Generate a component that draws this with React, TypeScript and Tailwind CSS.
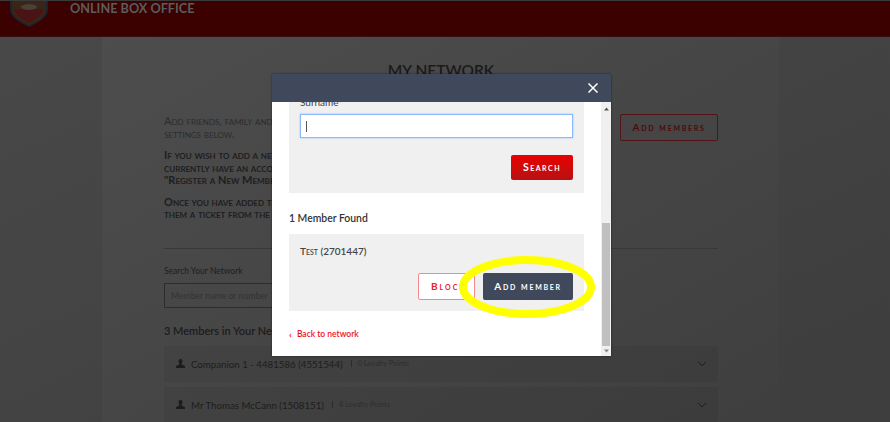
const font = "font-['Lato',sans-serif]";

function UserIcon() {
  return (
    <svg width="9" height="9" viewBox="0 0 12 11" preserveAspectRatio="none" className="shrink-0 text-[#1c1c1c]">
      <path
        fill="currentColor"
        d="M6 0c1.700 0 2.600 1.100 2.600 2.700 0 1.200-.5 2.200-1.100 2.900v1l3.600 1.700c.6.3.9.7.9 1.300V11H0V9.600c0-.6.3-1 .9-1.300l3.600-1.700v-1C3.900 4.900 3.400 3.900 3.400 2.700 3.400 1.100 4.300 0 6 0z"
      />
    </svg>
  );
}

function Chevron() {
  return (
    <svg width="10" height="6" viewBox="0 0 10 6" fill="none" stroke="#1c1c1c" strokeWidth="1" className="shrink-0">
      <path d="M1 .8l4 4 4-4" />
    </svg>
  );
}

function MemberRow({ name, points }: { name: string; points: string }) {
  return (
    <div className="flex h-[36px] items-center justify-between bg-black/5 pl-[12px] pr-[11px]">
      <div className="flex items-center">
        <UserIcon />
        <span className="ml-[6px] text-[9.700px] text-[#1d1d1d]">{name}</span>
        <span className="ml-[8px] h-[7px] w-px bg-[#2c2c2c]" />
        <span className="ml-[6px] text-[7.400px] text-[#2e2e2e]">{points}</span>
      </div>
      <Chevron />
    </div>
  );
}

function Page() {
  return (
    <div className="h-[422px] overflow-hidden bg-gradient-to-br from-[#494949] to-[#3d3d3d]">
      <div className="h-px bg-[#3a3a3a]" />
      <header className="flex h-[36px] overflow-hidden border-b border-[#331010] bg-[#3b0000] pl-[10px]">
        <svg width="38" height="26" viewBox="0 0 38 26" className="shrink-0">
          <path d="M0 0h38v8c0 8-9 13-19 18C9 21 0 16 0 8z" fill="#1c2433" />
          <path d="M2 0h34v8c0 7-8 12-17 16C10 20 2 15 2 8z" fill="#3a2616" />
          <path d="M4 8h30c-1 6-7 10-15 14C11 18 5 14 4 8z" fill="#4a1414" />
          <ellipse cx="19" cy="6" rx="8" ry="3" fill="#4a4035" />
        </svg>
        <div className="ml-[22px] text-[12.700px] leading-[14px] font-bold text-[#5c5c5c]">ONLINE BOX OFFICE</div>
      </header>
      <main className="ml-[102px] h-[385px] w-[677px] bg-gradient-to-br from-[#4d4d4d] to-[#3f3f3f] pl-[62px] pr-[61px]">
        <h1 className="pt-[22px] text-center text-[15.500px] leading-[22px] font-semibold text-[#1a1a1a]">MY NETWORK</h1>
        <div className="mt-[8px] flex h-[159px] justify-between">
          <div className="w-[400px] pt-[26px] text-[11px] leading-[12.500px] [font-variant:small-caps]">
            <p className="text-[#2c2c2c]">Add friends, family and<br />settings below.</p>
            <p className="mt-[9px] font-bold text-[#1e1e1e]">If you wish to add a new<br />currently have an account<br />"Register a New Member</p>
            <p className="mt-[9px] font-bold text-[#1e1e1e]">Once you have added them<br />them a ticket from the</p>
          </div>
          <div className="mt-[25px] flex h-[27px] w-[98px] items-center justify-center rounded-[2px] border border-[#521414] text-[10px] font-bold tracking-[1.700px] text-[#4d0a0a] [font-variant:small-caps]">
            Add members
          </div>
        </div>
        <div className="h-px bg-[#383838]" />
        <div className="mt-[16px] text-[8.500px] leading-[12px] text-[#1e1e1e]">Search Your Network</div>
        <div className="mt-[6px] flex h-[25px] w-[300px] items-center border border-[#2c2c2c] px-[6px] text-[8.700px] text-[#333333]">Member name or number</div>
        <div className="mt-[15px] text-[11px] leading-[16px] font-semibold text-[#1c1c1c]">3 Members in Your Network</div>
        <div className="mt-[7px] flex flex-col gap-[5px]">
          <MemberRow name="Companion 1 - 4481586 (4551544)" points="0 Loyalty Points" />
          <MemberRow name="Mr Thomas McCann (1508151)" points="8 Loyalty Points" />
        </div>
      </main>
    </div>
  );
}

function Modal() {
  return (
    <div className="absolute left-[272px] top-[74px] w-[339px] shadow-[0_0_2px_rgba(0,0,0,0.5)]">
      <div className="flex h-[28px] items-center justify-end bg-[#3f495b] pr-[13px]">
        <svg width="10" height="10" viewBox="0 0 10 10" stroke="#ffffff" strokeWidth="1.500">
          <path d="M.5.5l9 9M9.500.5l-9 9" />
        </svg>
      </div>
      <div className="flex h-[254px] overflow-hidden bg-white">
        <div className="flex-1 overflow-hidden px-[17px]">
          <div className="mt-[-5px] h-[96px] bg-[#f0f0f0] px-[11px]">
            <div className="h-[10px] text-[10px] leading-[10px] text-[#444444]">Surname*</div>
            <div className="mt-[7px] flex h-[24px] items-center border border-[#8ab8fa] bg-white pl-[5px] shadow-[0_0_2px_#9cc4fb]">
              <span className="h-[11px] w-px bg-[#555555]" />
            </div>
            <div className="mt-[17px] flex justify-end">
              <div className="flex h-[25px] w-[62px] items-center justify-center rounded-[2px] bg-gradient-to-b from-[#e80000] to-[#b81010] text-[10.500px] font-bold tracking-[1.500px] text-white [font-variant:small-caps]">
                Search
              </div>
            </div>
          </div>
          <div className="mt-[18px] text-[10.400px] leading-[14px] font-semibold text-[#333333]">1 Member Found</div>
          <div className="mt-[9px] h-[77px] bg-[#f0f0f0] px-[11px]">
            <div className="pt-[10px] text-[10px] leading-[14px] font-semibold text-[#444444] [font-variant:small-caps]">Test (2701447)</div>
            <div className="mt-[15px] flex justify-end gap-[8px]">
              <div className="flex h-[27px] w-[57px] items-center overflow-hidden rounded-[2px] border border-[#f58a8a] bg-white pl-[12px] text-[10px] font-bold tracking-[2px] text-[#e8202a] [font-variant:small-caps]">
                Block
              </div>
              <div className="flex h-[27px] w-[90px] items-center justify-center rounded-[2px] bg-[#3f495b] text-[10px] font-bold tracking-[1.700px] text-white [font-variant:small-caps]">
                Add member
              </div>
            </div>
          </div>
          <div className="mt-[17px] flex items-center text-[8.500px] leading-[12px] font-semibold text-[#f0101c]">
            <span className="mr-[5px] text-[10px]">‹</span>Back to network
          </div>
        </div>
        <div className="flex w-[10px] shrink-0 flex-col items-center bg-[#f0f0f0]">
          <svg width="5" height="4" viewBox="0 0 5 4" className="mt-[5px] shrink-0"><path d="M2.500.5L5 3.500H0z" fill="#555555" /></svg>
          <div className="mt-[112px] h-[123px] w-[8px] shrink-0 bg-[#c0c0c0]" />
          <svg width="5" height="4" viewBox="0 0 5 4" className="mt-[3px] shrink-0"><path d="M2.500 3.500L5 .5H0z" fill="#888888" /></svg>
        </div>
      </div>
    </div>
  );
}

export default function App() {
  return (
    <div className={`relative h-[422px] w-[890px] overflow-hidden ${font}`}>
      <Page />
      <Modal />
      {/* hand drawn highlight round the button */}
      <svg width="140" height="66" viewBox="0 0 140 66" fill="none" className="absolute left-[458px] top-[255px]">
        <ellipse cx="69" cy="32" rx="64" ry="27" stroke="#ffff00" strokeWidth="8" />
      </svg>
    </div>
  );
}
